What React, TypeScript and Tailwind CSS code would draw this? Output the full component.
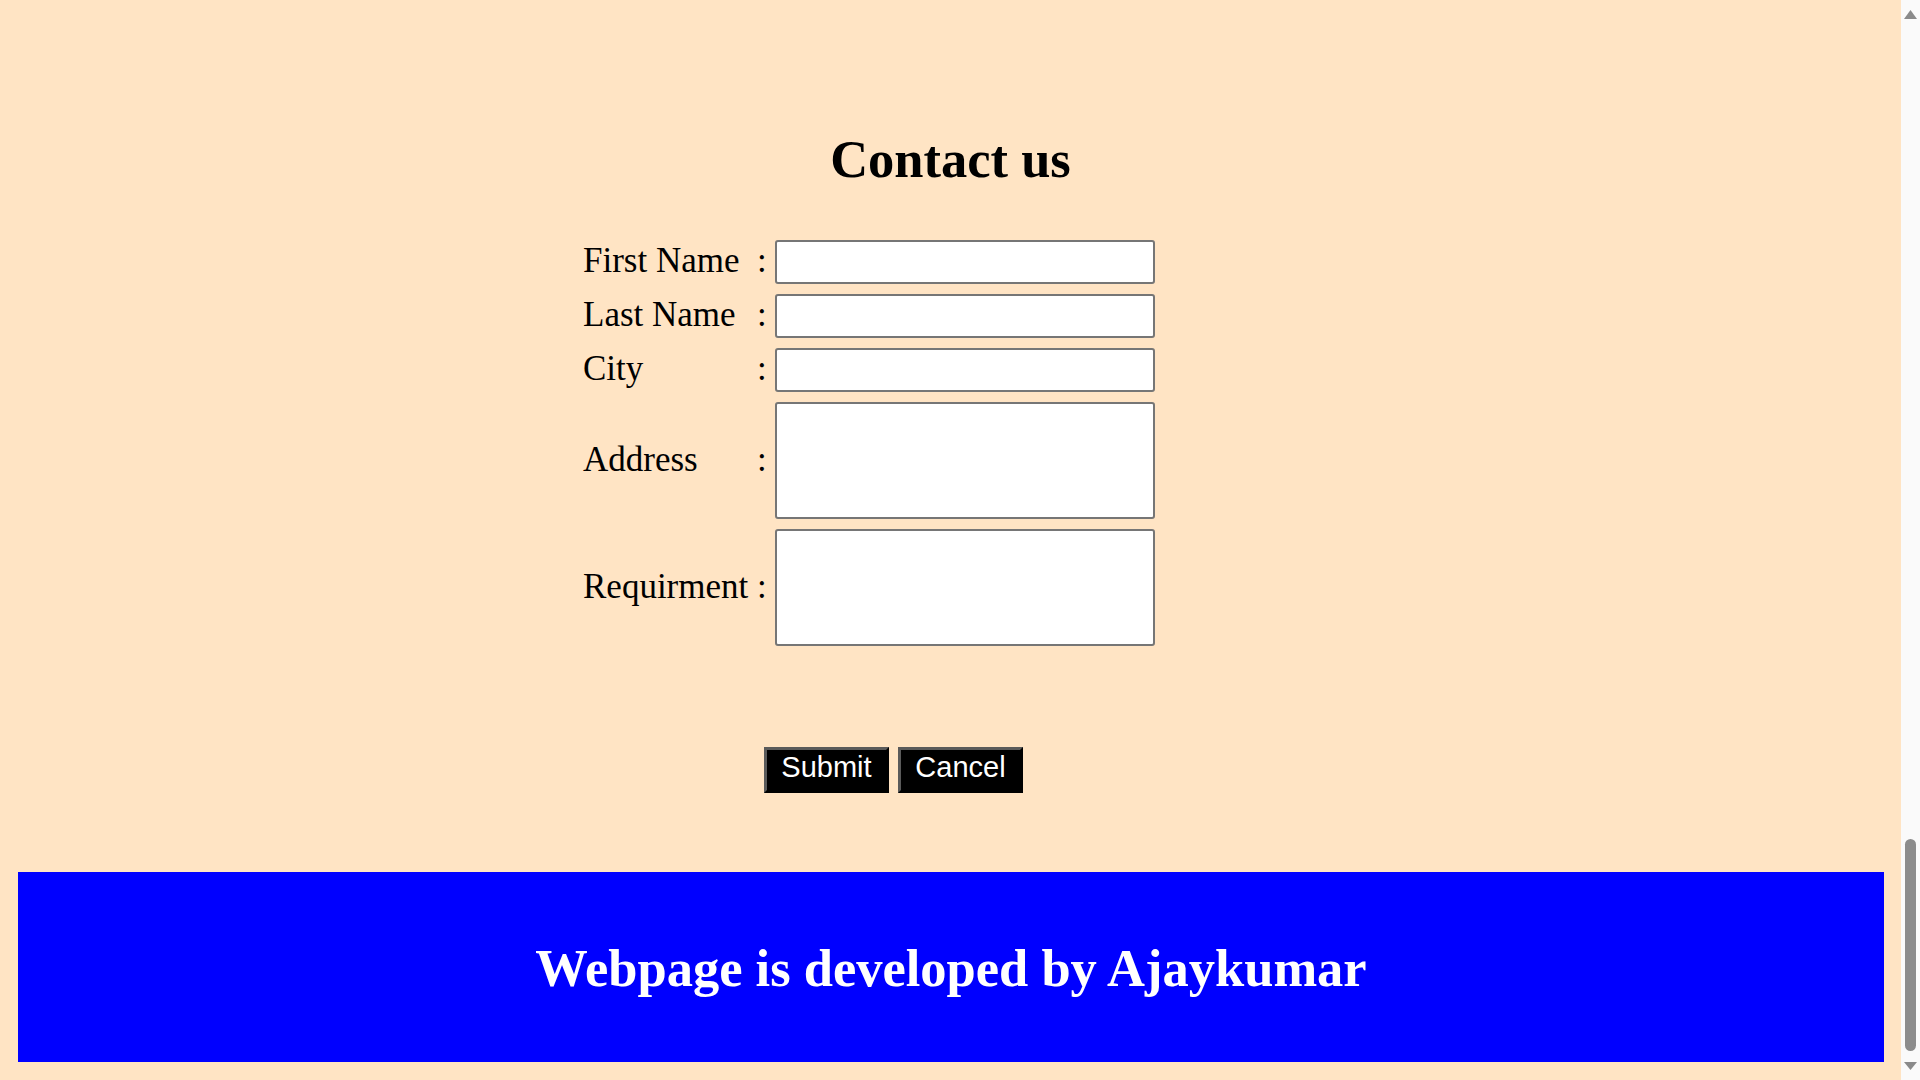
import React from 'react';

const serif = { fontFamily: '"Liberation Serif", "Times New Roman", serif' };

const fields = [
  { label: 'First Name', tall: false },
  { label: 'Last Name', tall: false },
  { label: 'City', tall: false },
  { label: 'Address', tall: true },
  { label: 'Requirment', tall: true },
];

const App: React.FC = () => {
  return (
    <div className="flex h-[1080px] w-full overflow-hidden bg-[#ffe4c4] text-black" style={serif}>
      <div className="flex w-[1901px] shrink-0 flex-col">
        <h1 className="mt-[129px] text-center text-[52.5px] font-bold leading-[60px]">Contact us</h1>

        <form className="mt-[51px] ml-[583px] grid grid-cols-[174px_18px_380px] items-center gap-y-[10px]">
          {fields.map((f) => (
            <React.Fragment key={f.label}>
              <label className="-mt-[2px] text-[35px] leading-[40px] whitespace-nowrap">{f.label}</label>
              <span className="-mt-[2px] text-[35px] leading-[40px]">:</span>
              {f.tall ? (
                <textarea className="h-[117px] w-[380px] resize-none rounded-[3px] border-2 border-[#767676] bg-white" />
              ) : (
                <input type="text" className="h-[44px] w-[380px] rounded-[3px] border-2 border-[#767676] bg-white" />
              )}
            </React.Fragment>
          ))}
        </form>

        <div className="mt-[101px] flex gap-[9px] pl-[764px]" style={{ fontFamily: '"Liberation Sans", Arial, sans-serif' }}>
          <button className="h-[46px] w-[125px] border-[3px] border-t-[#5a5a5a] border-l-[#5a5a5a] border-r-black border-b-black bg-black pb-[5px] text-[29px] leading-[33px] text-white">
            Submit
          </button>
          <button className="h-[46px] w-[125px] border-[3px] border-t-[#5a5a5a] border-l-[#5a5a5a] border-r-black border-b-black bg-black pb-[5px] text-[29px] leading-[33px] text-white">
            Cancel
          </button>
        </div>

        <footer className="mt-[79px] ml-[18px] mr-[17px] flex h-[190px] items-center justify-center bg-[#0000ff]">
          <p className="mt-[2px] text-[52.5px] font-bold leading-[60px] text-white">Webpage is developed by Ajaykumar</p>
        </footer>
      </div>

      {/* page scrollbar as it shows in the shot */}
      <div className="flex w-[19px] shrink-0 flex-col items-center bg-[#fafafa]">
        <svg width="13" height="9" viewBox="0 0 13 9" className="mt-[10px]">
          <polygon points="6.5,0 13,9 0,9" fill="#8a8a8a" />
        </svg>
        <div className="flex-1" />
        <div className="h-[212px] w-[11px] rounded-full bg-[#8c8c8c]" />
        <svg width="13" height="8" viewBox="0 0 13 8" className="mt-[11px] mb-[10px]">
          <polygon points="0,0 13,0 6.5,8" fill="#8a8a8a" />
        </svg>
      </div>
    </div>
  );
};

export default App;
